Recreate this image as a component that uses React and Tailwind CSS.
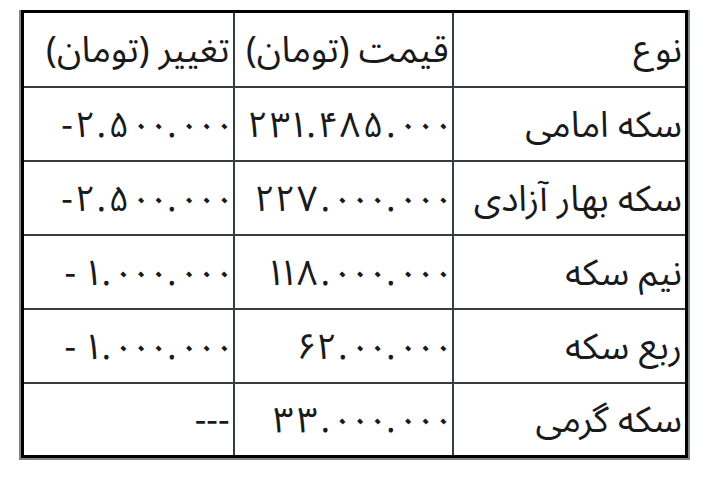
import React from "react";

const rows = [
  { name: "سکه امامی", price: "۲۳۱.۴۸۵.۰۰۰", change: "۲.۵۰۰.۰۰۰-" },
  { name: "سکه بهار آزادی", price: "۲۲۷.۰۰۰.۰۰۰", change: "۲.۵۰۰.۰۰۰-" },
  { name: "نیم سکه", price: "۱۱۸.۰۰۰.۰۰۰", change: "۱.۰۰۰.۰۰۰ -" },
  { name: "ربع سکه", price: "۶۲.۰۰.۰۰۰", change: "۱.۰۰۰.۰۰۰ -" },
  { name: "سکه گرمی", price: "۳۳.۰۰۰.۰۰۰", change: "---" },
];

const cell = "border-2 border-[#363c42] pl-[2px] pr-[3px] align-middle text-right";

// the font draws ۰ as a dot, so space the digits out to the width in the picture
const Num = ({ value }) => (
  <>
    {[...value].map((ch, i) => {
      let pad = "";
      if (ch === "۰") pad = "pl-[7px]";
      else if (ch !== "-" && ch !== " ") pad = "pl-[3px]";
      return (
        <span key={i} className={pad}>
          {ch}
        </span>
      );
    })}
  </>
);

const App = () => {
  return (
    <div className="min-h-screen bg-white pl-[19px] pt-[10px]">
      {/* gray edge on the outer sides of the table */}
      <div className="w-[671px] border-x-2 border-b-2 border-[#7d848a]">
        <table
          dir="rtl"
          className="w-full table-fixed border-collapse border-[3px] border-black text-[36px] leading-none text-[#1a1a1a] font-['Noto_Sans_Arabic_UI','Noto_Sans_Arabic',sans-serif]"
        >
          <colgroup>
            <col className="w-[234px]" />
            <col className="w-[219px]" />
            <col />
          </colgroup>
          <thead>
            <tr className="h-[75px]">
              <th className={`${cell} font-normal`}>نوع</th>
              <th className={`${cell} font-normal`}>قیمت (تومان)</th>
              <th className={`${cell} font-normal`}>تغییر (تومان)</th>
            </tr>
          </thead>
          <tbody>
            {rows.map((r) => (
              <tr key={r.name} className="h-[74px]">
                <td className={cell}>{r.name}</td>
                <td className={cell}>
                  <Num value={r.price} />
                </td>
                <td className={cell}>
                  <Num value={r.change} />
                </td>
              </tr>
            ))}
          </tbody>
        </table>
      </div>
    </div>
  );
};

export default App;
